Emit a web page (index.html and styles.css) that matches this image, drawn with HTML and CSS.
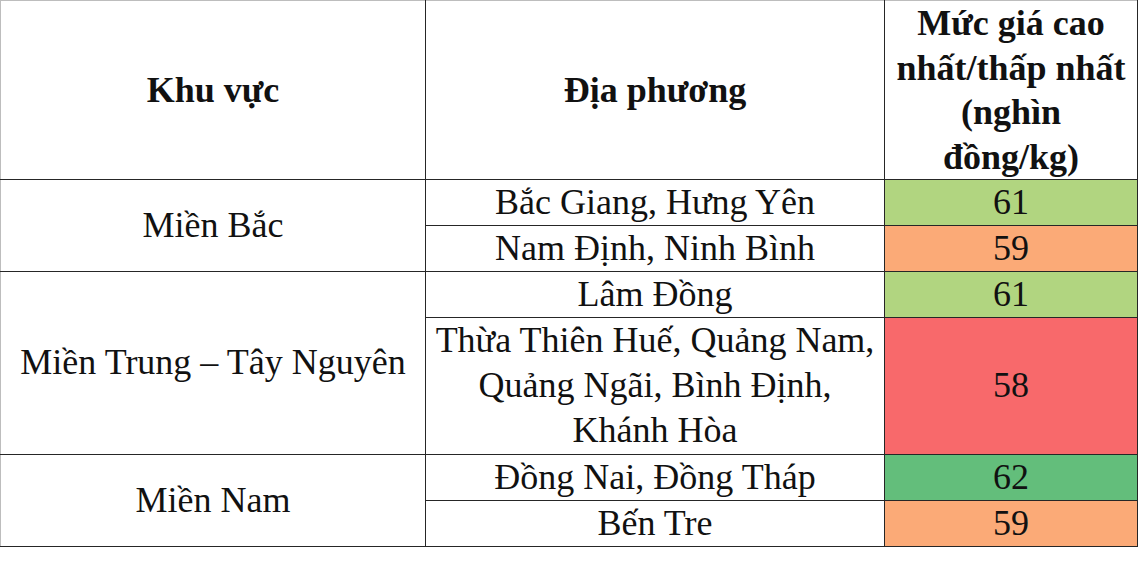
FILE: index.html
```html
<!DOCTYPE html>
<html lang="vi">
<head>
<meta charset="utf-8">
<link rel="stylesheet" href="styles.css">
</head>
<body>
<table class="price-table">
  <colgroup>
    <col class="c-region">
    <col class="c-place">
    <col class="c-price">
  </colgroup>
  <thead>
    <tr>
      <th>Khu vực</th>
      <th>Địa phương</th>
      <th>Mức giá cao<br>nhất/thấp nhất<br>(nghìn<br>đồng/kg)</th>
    </tr>
  </thead>
  <tbody>
    <tr>
      <td rowspan="2">Miền Bắc</td>
      <td>Bắc Giang, Hưng Yên</td>
      <td class="lg">61</td>
    </tr>
    <tr>
      <td>Nam Định, Ninh Bình</td>
      <td class="or">59</td>
    </tr>
    <tr>
      <td rowspan="2">Miền Trung – Tây Nguyên</td>
      <td>Lâm Đồng</td>
      <td class="lg">61</td>
    </tr>
    <tr>
      <td>Thừa Thiên Huế, Quảng Nam,<br>Quảng Ngãi, Bình Định,<br>Khánh Hòa</td>
      <td class="rd">58</td>
    </tr>
    <tr>
      <td rowspan="2">Miền Nam</td>
      <td>Đồng Nai, Đồng Tháp</td>
      <td class="dg">62</td>
    </tr>
    <tr>
      <td>Bến Tre</td>
      <td class="or">59</td>
    </tr>
  </tbody>
</table>
</body>
</html>
```
FILE: styles.css
```css
html, body {
  margin: 0;
  padding: 0;
  background: #ffffff;
}

.price-table {
  border-collapse: collapse;
  table-layout: fixed;
  width: 1137px;
  font-family: "Liberation Serif", "Times New Roman", serif;
  color: #111111;
  border-top: 1px solid #bdbdbd;
  border-left: 1px solid #bdbdbd;
}

.c-region { width: 425px; }
.c-place { width: 459px; }
.c-price { width: 253px; }

.price-table th,
.price-table td {
  border: 1px solid #262626;
  padding: 0;
  text-align: center;
  vertical-align: middle;
}

.price-table th {
  font-weight: bold;
  font-size: 36px;
  line-height: 44.5px;
  height: 177px;
}

.price-table td {
  font-weight: normal;
  font-size: 36px;
  line-height: 45.1px;
}

.price-table thead th {
  border-top-color: #bdbdbd;
}

.price-table tr > :first-child {
  border-left-color: #bdbdbd;
}

.lg { background: #b1d580; }
.or { background: #fbaa77; }
.rd { background: #f8696b; }
.dg { background: #63be7b; }
```
